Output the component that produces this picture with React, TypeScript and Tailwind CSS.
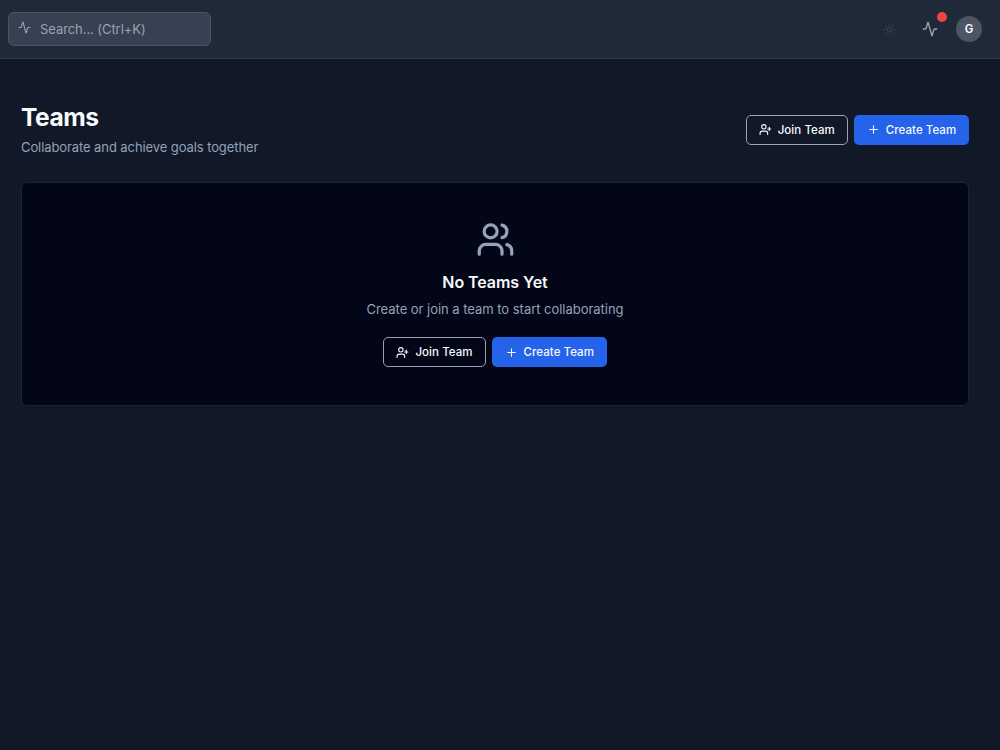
import { Activity, Plus, Sun, UserPlus, Users } from "lucide-react";

function TeamActions() {
  return (
    <div className="flex gap-1.5">
      <button className="flex h-[30px] w-[102.5px] items-center justify-center gap-1.5 rounded-[5px] border border-[#9ca3af] text-[11.5px] font-medium tracking-[0.05px] text-slate-50">
        <UserPlus size={13} />
        <span className="pt-[2px]">Join Team</span>
      </button>
      <button className="flex h-[30px] w-[115px] items-center justify-center gap-1.5 rounded-[5px] bg-[#2563eb] text-[11.5px] font-medium tracking-[0.05px] text-slate-50">
        <Plus size={13} />
        <span className="pt-[2px]">Create Team</span>
      </button>
    </div>
  );
}

function Header() {
  return (
    <header className="flex h-[59px] items-center justify-between border-b border-[#2f3947] bg-[#1f2937] pr-[18px] pl-2">
      <div className="flex h-[34px] w-[203px] items-center gap-[9.5px] rounded-md border border-[#4b5563] bg-[#374151] px-[8.5px] text-[#9ca3af]">
        <Activity size={13} className="mb-1" />
        <span className="pt-px text-[13px] tracking-[-0.07px]">Search... (Ctrl+K)</span>
      </div>
      <div className="flex items-center">
        <Sun size={13} className="mr-[25.5px] text-[#374151]" />
        <div className="relative mr-[18.5px]">
          <Activity size={16} className="text-[#9ca3af]" />
          <span className="absolute -top-[9px] -right-[9px] h-2.5 w-2.5 rounded-full bg-[#ef4444]" />
        </div>
        <div className="flex h-[26px] w-[26px] items-center justify-center rounded-full bg-[#4b5563] pt-[2px] text-[11.5px] font-semibold text-white">
          G
        </div>
      </div>
    </header>
  );
}

export default function App() {
  return (
    <div className="min-h-screen bg-[#111827] font-['Inter',sans-serif]">
      <Header />
      <main className="pt-[41px] pr-[31px] pl-[21px]">
        <div className="flex items-center justify-between">
          <div>
            <h1 className="text-[24.6px] leading-[34px] font-bold tracking-[-0.45px] text-slate-50">
              Teams
            </h1>
            <p className="mt-[3px] text-[13px] leading-5 tracking-[-0.09px] text-[#94a3b8]">
              Collaborate and achieve goals together
            </p>
          </div>
          <div className="pt-[2px]">
            <TeamActions />
          </div>
        </div>
        <section className="mt-[25px] flex h-[224px] flex-col items-center rounded-md border border-[#1a2436] bg-[#020617] pt-[37px]">
          <Users size={39} className="text-[#94a3b8]" />
          <h2 className="mt-[11px] text-[16px] leading-6 font-semibold tracking-[-0.08px] text-slate-50">
            No Teams Yet
          </h2>
          <p className="mt-[5px] mb-[18px] text-[13px] leading-5 tracking-[-0.03px] text-[#94a3b8]">
            Create or join a team to start collaborating
          </p>
          <TeamActions />
        </section>
      </main>
    </div>
  );
}
